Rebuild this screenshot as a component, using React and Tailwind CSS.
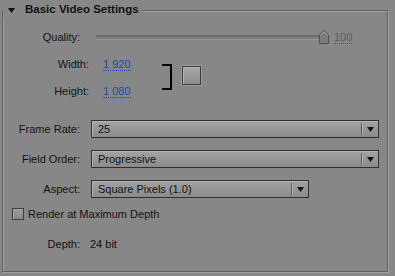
import React from "react";

function Dropdown({ value, width }) {
  return (
    <div
      className={`flex h-[18px] items-center border border-[#2f2f2f] bg-gradient-to-b from-[#a3a3a3] to-[#8b8b8b] shadow-[inset_1px_1px_0_#b4b4b4] ${width}`}
    >
      <span className="flex-1 pl-[6px] leading-none text-[#111]">{value}</span>
      <div className="h-[12px] w-px bg-[#5c5c5c] shadow-[1px_0_0_#b2b2b2]" />
      <div className="flex w-[16px] justify-center">
        <svg width="7" height="5" viewBox="0 0 7 5">
          <polygon points="0,0 7,0 3.5,5" fill="#111" />
        </svg>
      </div>
    </div>
  );
}

function Label({ children, w = "w-[77px]" }) {
  return <span className={`${w} shrink-0 text-right text-[#121212]`}>{children}</span>;
}

export default function App() {
  return (
    <div className="h-[276px] w-[395px] overflow-hidden bg-[#878787] pl-[2px] pt-[10px] font-['Liberation_Sans',Arial,sans-serif] text-[11px]">
      <div className="flex h-[262px] w-[386px] flex-col border border-[#5f5f5f] shadow-[inset_1px_1px_0_#a2a2a2,1px_1px_0_#a2a2a2]">
        {/* header */}
        <div className="-mt-[9px] flex h-[16px]">
          <span className="flex items-center gap-[10px] bg-[#878787] pl-[5px] pr-[4px]">
            <svg width="7" height="5" viewBox="0 0 7 5">
              <polygon points="0,0 7,0 3.5,5" fill="#0d0d0d" />
            </svg>
            <span className="text-[11.5px] font-bold text-[#111]">Basic Video Settings</span>
          </span>
        </div>

        {/* Quality */}
        <div className="mt-[10px] flex h-[18px] items-center">
          <Label>Quality:</Label>
          <div className="ml-[16px] flex items-center">
            <div className="h-[4px] w-[224px] border-t-2 border-[#6c6c6c] bg-[#7f7f7f] shadow-[0_1px_0_#939393]" />
            <svg width="10" height="14" viewBox="0 0 10 14" className="-ml-px">
              <polygon points="5,0.5 9.5,5 9.5,13.5 0.5,13.5 0.5,5" fill="#7b7b7b" stroke="#4e4e4e" />
              <polyline points="1.5,5.5 5,1.8 8.5,5.5" fill="none" stroke="#a8a8a8" />
            </svg>
            <span className="ml-[5px] border-b border-dotted border-[#5b5b5b] leading-[12px] text-[#5b5b5b]">100</span>
          </div>
        </div>

        {/* Width / Height */}
        <div className="mt-[9px] flex">
          <div className="flex flex-col gap-[9px]">
            <div className="flex h-[18px] items-center">
              <Label w="w-[86px]">Width:</Label>
              <span className="ml-[14px] border-b border-dotted border-[#1e47a6] leading-[12px] text-[#1e47a6]">1 920</span>
            </div>
            <div className="flex h-[18px] items-center">
              <Label w="w-[86px]">Height:</Label>
              <span className="ml-[14px] border-b border-dotted border-[#1e47a6] leading-[12px] text-[#1e47a6]">1 080</span>
            </div>
          </div>
          <div className="ml-[31px] mt-[9px] h-[26px] w-[10px] border-y-2 border-r-2 border-[#000]" />
          <div className="ml-[10px] mt-[11px] h-[19px] w-[19px] border border-[#3b3b3b] bg-gradient-to-b from-[#a8a8a8] to-[#8c8c8c] shadow-[0_0_0_1px_#9c9c9c,inset_1px_1px_0_#b6b6b6]" />
        </div>

        {/* Frame Rate */}
        <div className="mt-[20px] flex h-[18px] items-center">
          <Label>Frame Rate:</Label>
          <div className="ml-[11px]">
            <Dropdown value="25" width="w-[288px]" />
          </div>
        </div>

        {/* Field Order */}
        <div className="mt-[12px] flex h-[18px] items-center">
          <Label>Field Order:</Label>
          <div className="ml-[11px]">
            <Dropdown value="Progressive" width="w-[288px]" />
          </div>
        </div>

        {/* Aspect */}
        <div className="mt-[12px] flex h-[18px] items-center">
          <Label>Aspect:</Label>
          <div className="ml-[11px]">
            <Dropdown value="Square Pixels (1.0)" width="w-[218px]" />
          </div>
        </div>

        {/* Render at Maximum Depth */}
        <div className="mt-[7px] flex h-[18px] items-center pl-[9px]">
          <div className="h-[12px] w-[12px] border border-[#3d3d3d] bg-gradient-to-b from-[#9a9a9a] to-[#8a8a8a] shadow-[inset_1px_1px_0_#a8a8a8]" />
          <span className="ml-[4px] text-[#121212]">Render at Maximum Depth</span>
        </div>

        {/* Depth */}
        <div className="mt-[12px] flex h-[18px] items-center">
          <Label>Depth:</Label>
          <span className="ml-[10px] text-[#121212]">24 bit</span>
        </div>
      </div>
    </div>
  );
}
